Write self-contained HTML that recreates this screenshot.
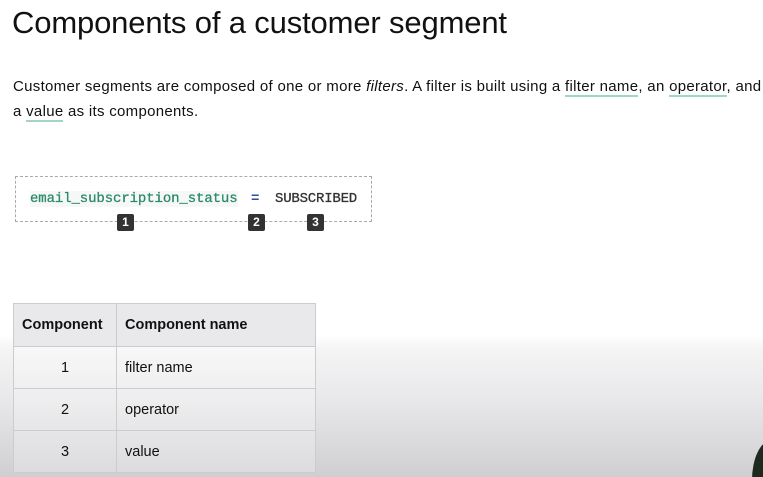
<!DOCTYPE html>
<html><head><style>
html,body{margin:0;padding:0;width:763px;height:477px;overflow:hidden;font-family:"Liberation Sans",sans-serif;color:#111;}
body{background:linear-gradient(to bottom,#fff 0,#fff 335px,#f4f4f5 350px,#e8e8ea 400px,#cfcfd2 477px);position:relative;}
h1{position:absolute;left:12px;top:5px;margin:0;font-weight:400;font-size:31px;letter-spacing:-0.15px;color:#111;}
p{position:absolute;left:13px;top:74px;margin:0;font-size:15px;line-height:25px;width:760px;letter-spacing:0.3px;white-space:nowrap;}
u{text-decoration:none;border-bottom:2px solid #9fd6c6;}
.box{position:absolute;left:15px;top:176px;width:357px;height:46px;border:1.5px dashed #aaa;box-sizing:border-box;}
.code{position:absolute;top:191px;font-family:"Liberation Mono",monospace;font-size:14px;font-weight:bold;letter-spacing:-0.1px;}
.b{position:absolute;top:214px;width:17px;height:17px;background:#333;color:#fff;font-size:12px;font-weight:bold;text-align:center;line-height:17px;border-radius:2px;}
table{position:absolute;left:13px;top:303px;border-collapse:collapse;font-size:14.5px;}
td,th{border:1px solid #ccc;height:42px;padding:0 8px;box-sizing:border-box;}
th{background:#e9e9eb;text-align:left;font-weight:bold;height:43px;}
td{background:rgba(255,255,255,0.25);}
.c{text-align:center;}
.n{width:199px;}
</style></head><body>
<h1>Components of a customer segment</h1>
<p>Customer segments are composed of one or more <i>filters</i>. A filter is built using a <u>filter name</u>, an <u>operator</u>, and<br>a <u>value</u> as its components.</p>
<div class="box"></div>
<span class="code" style="left:30px;color:#2b8a6a;background:#f6f8f7;font-weight:normal;-webkit-text-stroke:0.3px #2b8a6a;">email_subscription_status</span>
<span class="code" style="left:251px;color:#2d4e9a;">=</span>
<span class="code" style="left:275px;color:#333;font-weight:normal;-webkit-text-stroke:0.3px #333;letter-spacing:-0.2px;">SUBSCRIBED</span>
<div class="b" style="left:117px">1</div>
<div class="b" style="left:248px">2</div>
<div class="b" style="left:307px">3</div>
<table>
<tr><th style="width:103px">Component</th><th class="n">Component name</th></tr>
<tr><td class="c">1</td><td>filter name</td></tr>
<tr><td class="c">2</td><td>operator</td></tr>
<tr><td class="c">3</td><td>value</td></tr>
</table>
<div style="position:absolute;left:752px;top:440px;width:40px;height:80px;border-radius:50%;background:#1e2a1e;"></div>
</body></html>
